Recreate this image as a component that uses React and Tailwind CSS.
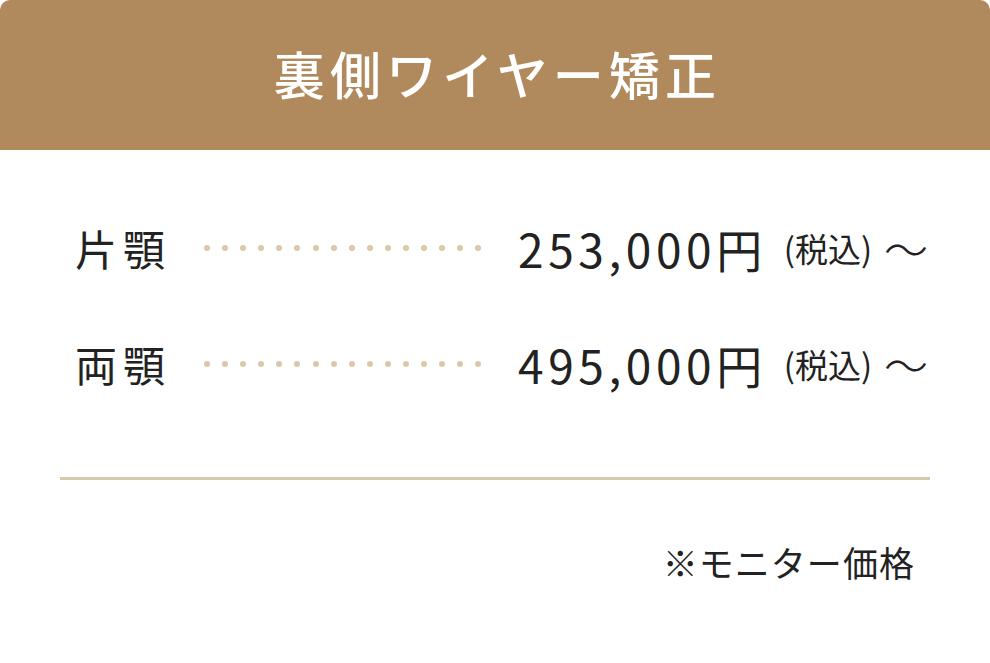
export default function App() {
  const rows = [
    { label: "片顎", price: "253,000円" },
    { label: "両顎", price: "495,000円" },
  ];
  return (
    <div className="w-[990px] h-[663px] bg-white" style={{ fontFamily: '"Noto Sans CJK JP", "Noto Sans", sans-serif' }}>
      <div className="h-[150px] bg-[#b08a5c] rounded-t-[10px] flex items-center justify-center">
        <h1 className="text-white text-[51px] font-medium tracking-[0.1em] leading-none pl-[5px] -mt-[4px]">裏側ワイヤー矯正</h1>
      </div>
      <div className="px-[60px] pt-[75px]">
        <div className="flex flex-col gap-[70px] pl-[15px]">
          {rows.map((r) => (
            <div key={r.label} className="flex items-center h-[46px] text-[#222]">
              <span className="text-[42px] leading-none tracking-[6px] w-[129px]">{r.label}</span>
              <div className="flex gap-[12.1px] w-[290px]">
                {Array.from({ length: 16 }).map((_, i) => (
                  <span key={i} className="w-[6px] h-[6px] rounded-full bg-[#ddc7aa]" />
                ))}
              </div>
              <span className="ml-[24px] text-[46px] leading-none tracking-[0.1em]">{r.price}</span>
              <span className="ml-[17px] text-[33px] leading-none">(税込)</span>
              <span className="ml-[12px] text-[44px] font-light leading-none">～</span>
            </div>
          ))}
        </div>
        <div className="mt-[90px] h-[3px] bg-[#d8c6ad]" />
        <div className="flex justify-end pt-[64px] pr-[15px]">
          <span className="text-[35px] leading-none text-[#222] tracking-[0.03em]">※モニター価格</span>
        </div>
      </div>
    </div>
  );
}
